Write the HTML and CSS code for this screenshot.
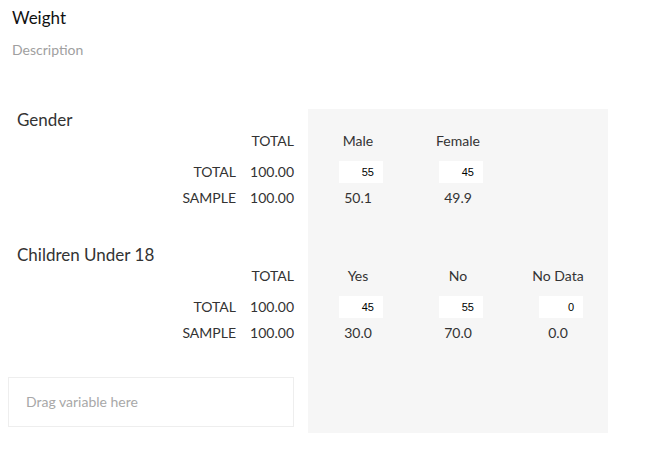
FILE: index.html
```html
<!DOCTYPE html>
<html>
<head>
<meta charset="utf-8">
<link rel="stylesheet" href="styles.css">
</head>
<body>
<header class="head">
  <div class="title">Weight</div>
  <div class="desc">Description</div>
</header>
<main class="board">
  <section class="section">
    <div class="sec-title">Gender</div>
    <div class="grid">
      <div class="cell label hdr"></div>
      <div class="cell total hdr">TOTAL</div>
      <div class="cell col hdr">Male</div>
      <div class="cell col hdr">Female</div>
      <div class="cell col hdr"></div>

      <div class="cell label">TOTAL</div>
      <div class="cell total">100.00</div>
      <div class="cell col"><span class="inp">55</span></div>
      <div class="cell col"><span class="inp">45</span></div>
      <div class="cell col"></div>

      <div class="cell label">SAMPLE</div>
      <div class="cell total">100.00</div>
      <div class="cell col">50.1</div>
      <div class="cell col">49.9</div>
      <div class="cell col"></div>
    </div>
  </section>
  <section class="section second">
    <div class="sec-title">Children Under 18</div>
    <div class="grid">
      <div class="cell label hdr"></div>
      <div class="cell total hdr">TOTAL</div>
      <div class="cell col hdr">Yes</div>
      <div class="cell col hdr">No</div>
      <div class="cell col hdr">No Data</div>

      <div class="cell label">TOTAL</div>
      <div class="cell total">100.00</div>
      <div class="cell col"><span class="inp">45</span></div>
      <div class="cell col"><span class="inp">55</span></div>
      <div class="cell col"><span class="inp">0</span></div>

      <div class="cell label">SAMPLE</div>
      <div class="cell total">100.00</div>
      <div class="cell col">30.0</div>
      <div class="cell col">70.0</div>
      <div class="cell col">0.0</div>
    </div>
  </section>
  <div class="drop">Drag variable here</div>
</main>
</body>
</html>
```
FILE: styles.css
```css
* { box-sizing: border-box; }
html, body { margin: 0; padding: 0; background: #fff; }
body {
  font-family: Lato, "Open Sans", sans-serif;
  color: #333;
  width: 661px;
}
.head { padding: 8px 12px 0; }
.title { font-size: 17px; line-height: 20px; color: #111; }
.desc { font-size: 14px; line-height: 18px; color: #a0a0a0; margin-top: 13px; }

.board {
  margin-top: 50px;
  padding-bottom: 6px;
  background: linear-gradient(to right, transparent 308px, #f6f6f6 308px, #f6f6f6 608px, transparent 608px);
}
.section { padding-top: 2px; }
.second { margin-top: 33px; }
.sec-title {
  font-size: 17px;
  line-height: 18px;
  padding-left: 17px;
  color: #333;
}
.grid {
  display: grid;
  grid-template-columns: 236px 72px 100px 100px 100px;
  grid-template-rows: 30px 26px 26px;
  font-size: 14px;
  line-height: 26px;
}
.grid .hdr { height: 22px; line-height: 22px; margin-top: 1px; align-self: start; }
.label { text-align: right; }
.total { text-align: right; padding-right: 14px; }
.col { text-align: center; display: flex; justify-content: center; align-items: center; }
.inp {
  display: block;
  width: 44px;
  height: 22px;
  margin-left: 6px;
  background: #fff;
  font-family: "Liberation Sans", Arial, sans-serif;
  font-size: 11px;
  line-height: 22px;
  color: #000;
  text-align: right;
  padding-right: 9px;
}
.drop {
  margin: 31px 0 0 8px;
  width: 286px;
  height: 50px;
  border: 1px solid #eeeeee;
  background: #fff;
  padding-left: 17px;
  font-size: 14px;
  line-height: 48px;
  color: #a8a8a8;
}
```
